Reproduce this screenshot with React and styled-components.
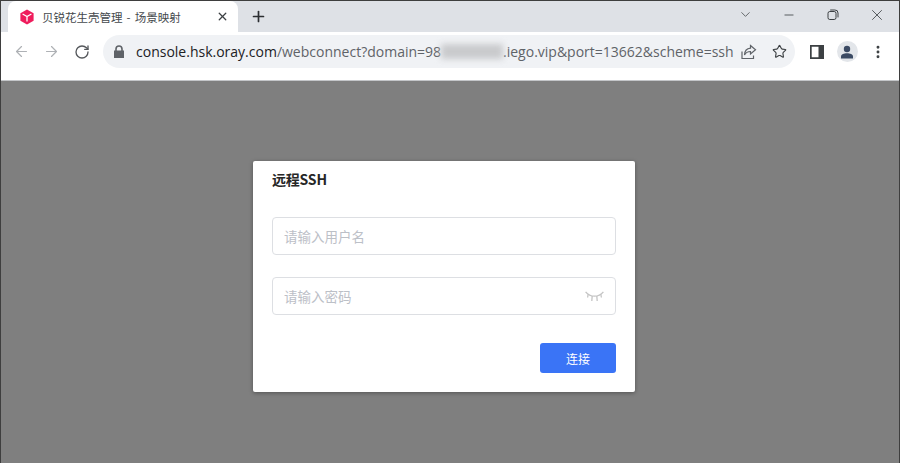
import styled, { createGlobalStyle } from "styled-components";
import { ArrowLeft, ArrowRight, RotateCw, Plus, X, Minus, ChevronDown, Star, MoreVertical } from "lucide-react";

const GlobalStyle = createGlobalStyle`
  html, body { margin: 0; padding: 0; height: 100%; }
  body { font-family: "Noto Sans CJK SC", "Open Sans", sans-serif; }
  #root { height: 100%; }
`;

const App = () => {
  return (
    <Frame>
      <GlobalStyle />
      <TabStrip>
        <Tab>
          <svg width="16" height="16" viewBox="0 0 16 16">
            <path d="M8 .6 14.6 4.3V11.7L8 15.4 1.4 11.7V4.3Z" fill="#ef1c5c" />
            <path d="M3.6 5 8 7.5 12.4 5M8 7.5V12.6" fill="none" stroke="#fff" strokeWidth="1.3" />
          </svg>
          <TabTitle>贝锐花生壳管理 - 场景映射</TabTitle>
          <TabClose><X size={13} strokeWidth={2.4} /></TabClose>
        </Tab>
        <NewTab><Plus size={17} strokeWidth={2.4} /></NewTab>
        <WindowControls>
          <WinButton $w={44}><ChevronDown size={15} strokeWidth={1.2} /></WinButton>
          <WinButton $w={44}><Minus size={14} strokeWidth={1.4} /></WinButton>
          <WinButton $w={44}>
            <svg width="12" height="12" viewBox="0 0 12 12" fill="none" stroke="#3c4043" strokeWidth="1">
              <rect x="1" y="2.5" width="8" height="8" rx="1.8" />
              <path d="M3.2 1h4.600A3 3 0 0 1 11 4v4.400" />
            </svg>
          </WinButton>
          <WinButton $w={44}><X size={18} strokeWidth={1.1} /></WinButton>
        </WindowControls>
      </TabStrip>
      <Toolbar>
        <NavIcon $muted><ArrowLeft size={17} strokeWidth={1.7} /></NavIcon>
        <NavIcon $muted><ArrowRight size={17} strokeWidth={1.7} /></NavIcon>
        <NavIcon><RotateCw size={16} strokeWidth={2} /></NavIcon>
        <AddressBar>
          <svg width="12" height="14" viewBox="0 0 12 14">
            <path d="M2.200 5.500V4a3.800 3.800 0 0 1 7.600 0v1.500H11V13H1V5.500ZM3.800 5.500h4.400V4a2.200 2.200 0 0 0-4.400 0Z" fill="#5f6368" />
          </svg>
          <Url>
            <UrlHost>console.hsk.oray.com</UrlHost>/webconnect?domain=98<Blurred />.iego.vip&amp;port=13662&amp;scheme=ssh
          </Url>
          <BarIcons>
            <svg width="16" height="16" viewBox="0 0 16 16" fill="none" stroke="#5f6368" strokeWidth="1.2">
              <path d="M9.500 1.500 14.500 5.800 9.500 10V7.500C6.500 7.500 4.800 8.500 3.500 11 3.700 7.300 5.800 4.500 9.500 4.200Z" />
              <path d="M1 7.500V14.500H12.500V11.500" />
            </svg>
            <Star size={15} strokeWidth={1.8} color="#3c4043" />
          </BarIcons>
        </AddressBar>
        <ToolbarEnd>
          <svg width="14" height="14" viewBox="0 0 14 14">
            <path d="M0 0H14V14H0ZM1.700 1.700V12.300H8.500V1.700Z" fill="#3c4043" fillRule="evenodd" />
          </svg>
          <Avatar>
            <svg width="14" height="14" viewBox="0 0 14 14" fill="#3b4a63">
              <circle cx="7" cy="4" r="3.200" />
              <path d="M1 13.500V11.500C1 9.500 4 8.300 7 8.300S13 9.500 13 11.500V13.500Z" />
            </svg>
          </Avatar>
          <MoreVertical size={16} strokeWidth={2.4} color="#3c4043" />
        </ToolbarEnd>
      </Toolbar>
      <Backdrop>
        <Dialog>
          <DialogTitle>远程SSH</DialogTitle>
          <Fields>
            <Field><FieldText>请输入用户名</FieldText></Field>
            <Field>
              <FieldText>请输入密码</FieldText>
              <svg width="19" height="11" viewBox="0 0 19 11" fill="none" stroke="#c4c4c4" strokeWidth="1.300">
                <path d="M.6 .8C3.200 4 6 5.200 9.500 5.200S15.800 4 18.400 .8" />
                <path d="M3.200 3 2.600 6.500M7.200 5 6.800 10M11.800 5 12.200 10M15.800 3 16.400 6.500" />
              </svg>
            </Field>
          </Fields>
          <Actions>
            <ConnectButton>连接</ConnectButton>
          </Actions>
        </Dialog>
      </Backdrop>
    </Frame>
  );
};

export default App;

const Frame = styled.div`
  width: 900px;
  height: 463px;
  box-sizing: border-box;
  border: 1px solid #3e3e3e;
  border-bottom: none;
  display: flex;
  flex-direction: column;
  overflow: hidden;
  background: #7f7f7f;
`;

const TabStrip = styled.div`
  height: 31px;
  flex: none;
  background: #dee1e6;
  display: flex;
  align-items: flex-end;
  padding-left: 7px;
`;

const Tab = styled.div`
  width: 230px;
  height: 31px;
  box-sizing: border-box;
  background: #fff;
  border-radius: 8px 8px 0 0;
  display: flex;
  align-items: center;
  padding: 0 3px 0 11px;
`;

const TabTitle = styled.span`
  flex: 1;
  margin-left: 7px;
  font-size: 11.500px;
  word-spacing: 1.500px;
  color: #45494d;
  white-space: nowrap;
`;

const TabClose = styled.span`
  display: flex;
  color: #3c4043;
  margin-right: 6px;
`;

const NewTab = styled.span`
  display: flex;
  align-items: center;
  height: 31px;
  margin-left: 12px;
  color: #2b2e31;
`;

const WindowControls = styled.div`
  margin-left: auto;
  height: 31px;
  box-sizing: border-box;
  display: flex;
  align-items: center;
  padding: 0 0 4px;
`;

const WinButton = styled.span`
  width: ${(p) => p.$w}px;
  display: flex;
  justify-content: center;
  color: #3c4043;
`;

const Toolbar = styled.div`
  height: 49px;
  flex: none;
  box-sizing: border-box;
  background: #fff;
  border-bottom: 1px solid #c4c6c9;
  display: flex;
  align-items: center;
  padding: 0 0 9px 5px;
`;

const NavIcon = styled.span`
  width: 30.500px;
  display: flex;
  justify-content: center;
  color: ${(p) => (p.$muted ? "#aeb1b5" : "#55585c")};
`;

const AddressBar = styled.div`
  width: 692px;
  height: 33px;
  margin-left: 5.500px;
  box-sizing: border-box;
  background: #f0f2f5;
  border-radius: 17px;
  display: flex;
  align-items: center;
  padding: 0 8px 0 10px;
`;

const Url = styled.span`
  margin-left: 11px;
  font-family: "Open Sans", sans-serif;
  font-size: 14px;
  color: #5f6368;
  white-space: nowrap;
  flex: 1;
  display: flex;
  align-items: center;
`;

const UrlHost = styled.span`
  color: #202124;
`;

const Blurred = styled.span`
  display: inline-block;
  width: 62px;
  height: 15px;
  background: #c9cacc;
  filter: blur(3px);
`;

const BarIcons = styled.span`
  display: flex;
  align-items: center;
  gap: 15px;
`;

const ToolbarEnd = styled.div`
  flex: 1;
  display: flex;
  align-items: center;
  justify-content: space-between;
  padding: 0 13px 0 15px;
`;

const Avatar = styled.span`
  width: 21px;
  height: 21px;
  border-radius: 50%;
  background: #e3e6ea;
  display: flex;
  align-items: center;
  justify-content: center;
`;

const Backdrop = styled.div`
  flex: 1;
  display: flex;
  justify-content: center;
  align-items: flex-start;
  padding: 80px 12px 0 0;
  background: #7f7f7f;
`;

const Dialog = styled.div`
  width: 382px;
  height: 231px;
  box-sizing: border-box;
  background: #fff;
  border-radius: 2px;
  box-shadow: 0 1px 4px rgba(0, 0, 0, 0.35);
  padding: 8px 19px 0;
  display: flex;
  flex-direction: column;
`;

const DialogTitle = styled.div`
  font-size: 14px;
  letter-spacing: -0.2px;
  line-height: 20px;
  font-weight: 700;
  color: #262626;
`;

const Fields = styled.div`
  margin-top: 28px;
  display: flex;
  flex-direction: column;
  gap: 22px;
`;

const Field = styled.div`
  height: 38px;
  box-sizing: border-box;
  border: 1px solid #dddfe3;
  border-radius: 4px;
  display: flex;
  align-items: center;
  justify-content: space-between;
  padding: 0 11px;
`;

const FieldText = styled.span`
  font-size: 13.500px;
  color: #bcc0c7;
`;

const Actions = styled.div`
  margin-top: 28px;
  display: flex;
  justify-content: flex-end;
`;

const ConnectButton = styled.button`
  width: 76px;
  height: 30px;
  border: none;
  border-radius: 3px;
  background: #3a74f6;
  color: #fff;
  font-family: inherit;
  font-size: 12px;
`;
